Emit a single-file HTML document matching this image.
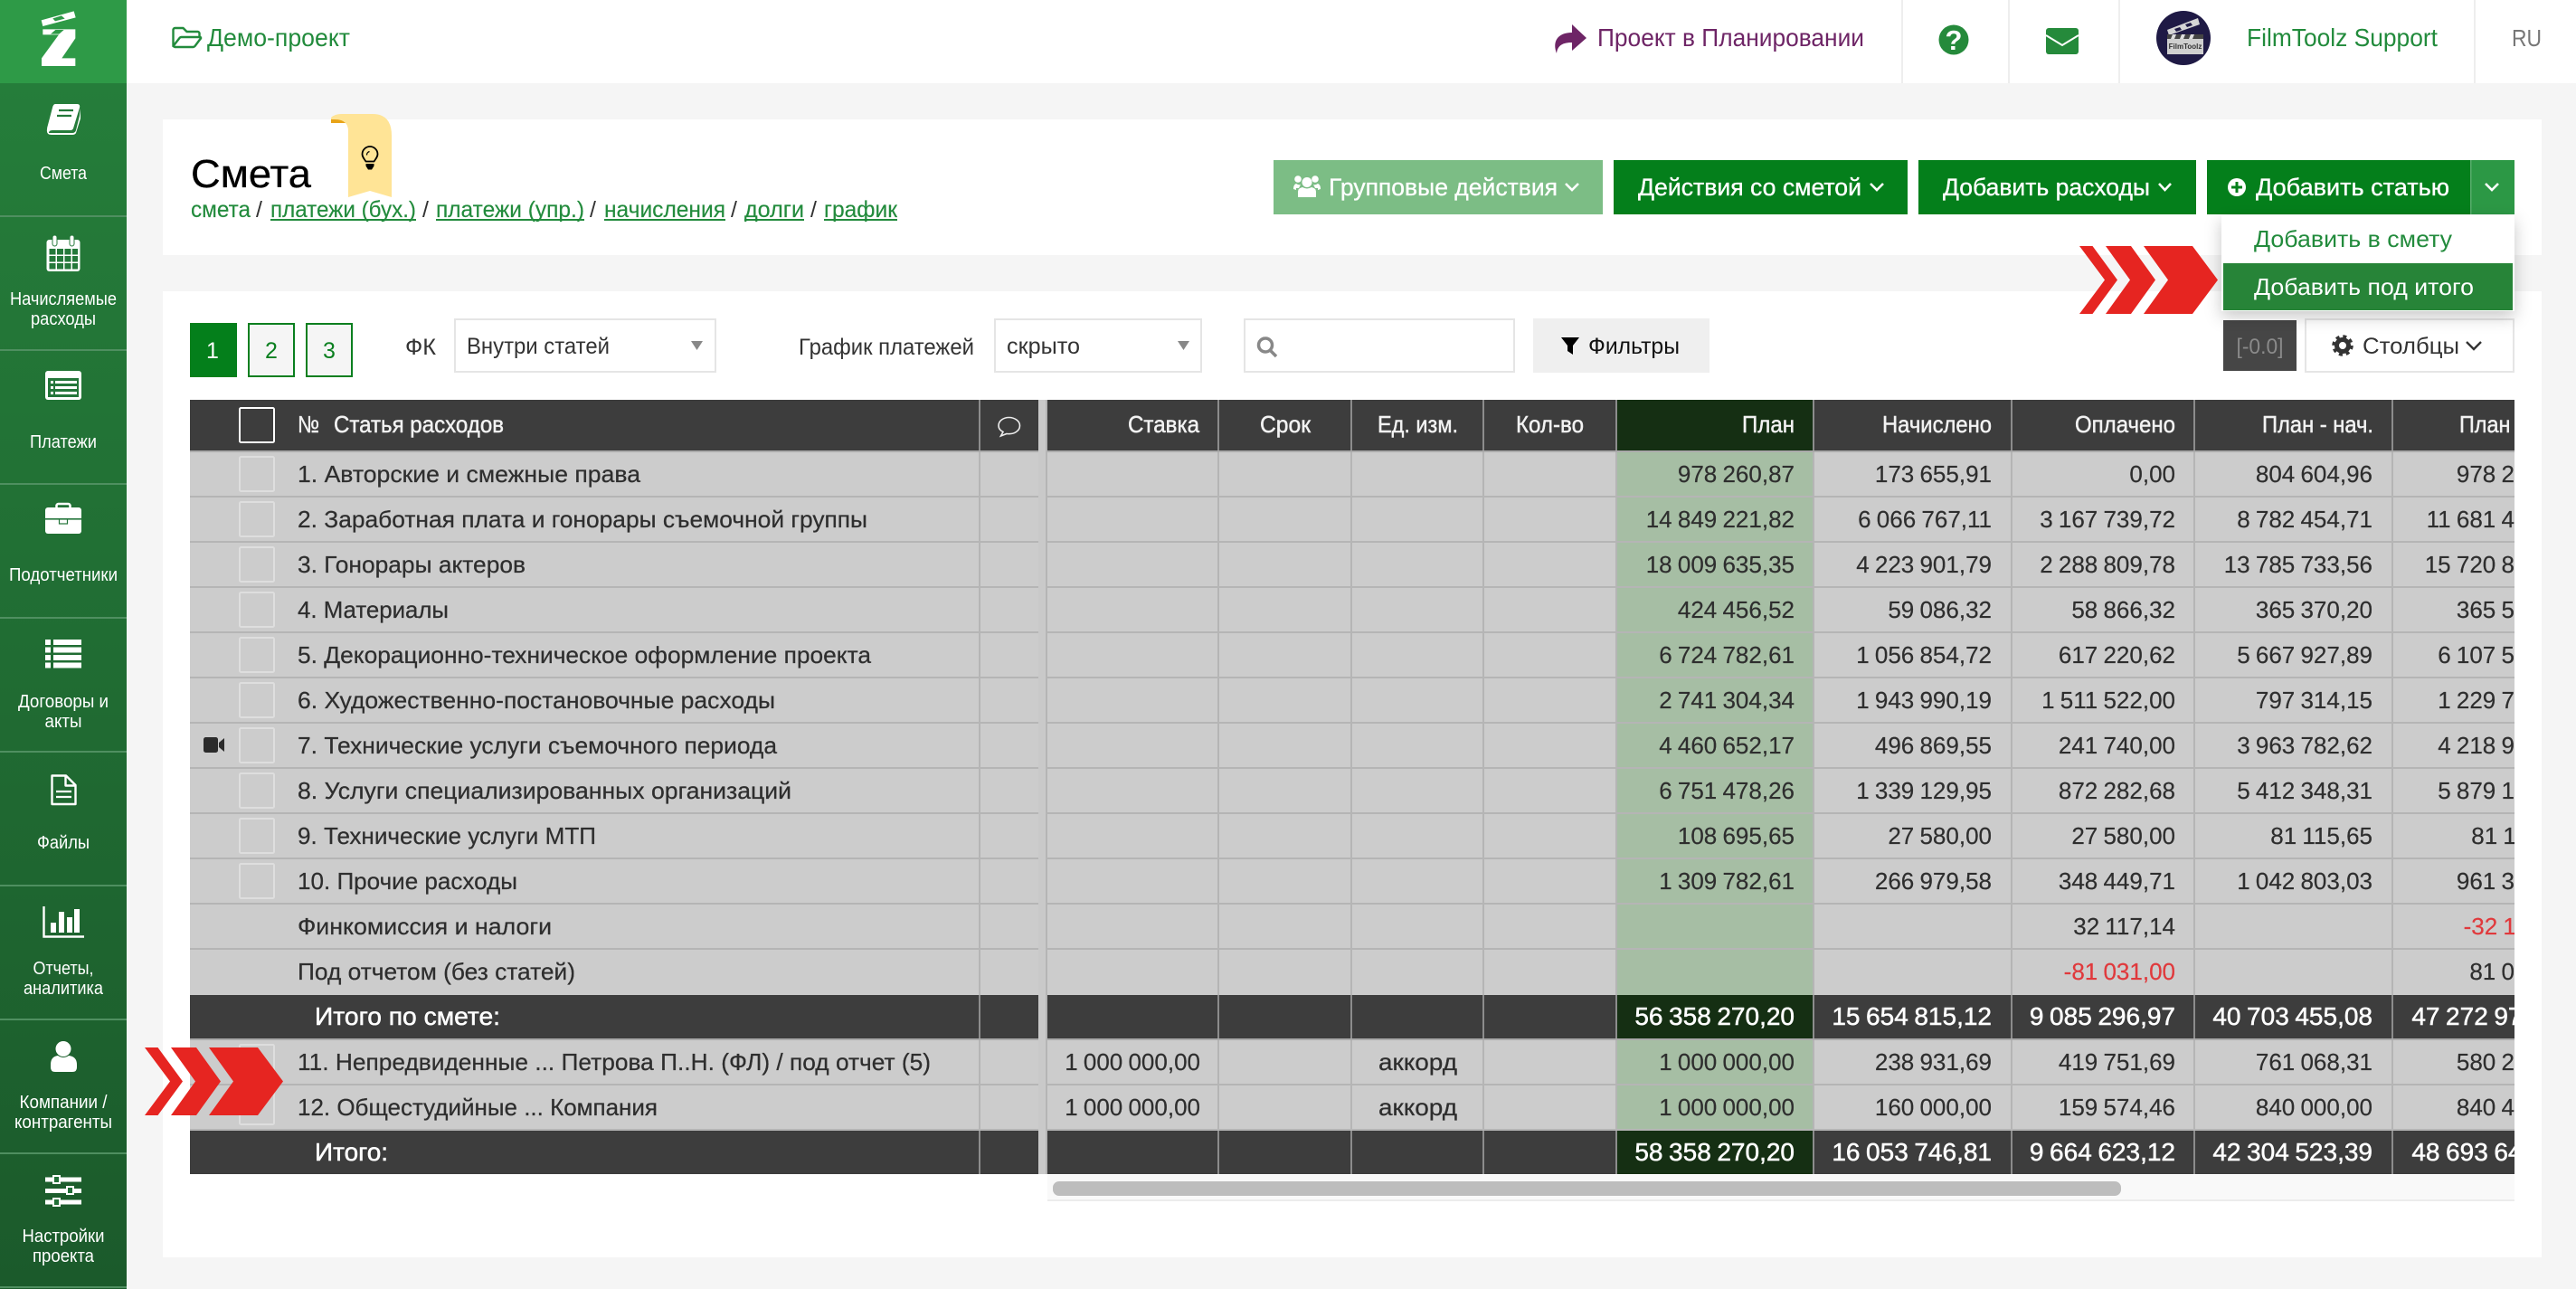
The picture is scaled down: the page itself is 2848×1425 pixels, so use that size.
<!DOCTYPE html>
<html lang="ru"><head><meta charset="utf-8"><title>Смета</title>
<style>
html,body{margin:0;padding:0;background:#f5f5f5;width:2848px;height:1425px;overflow:hidden}
svg{display:block}
text{font-family:"Liberation Sans","Noto Sans CJK SC",sans-serif;white-space:pre}
.s text{font-size:20px;fill:#fff;text-anchor:middle}
.r text{font-size:26px;fill:#2e2e2e;stroke:#2e2e2e;stroke-width:.25px}
.n text{font-size:26px;fill:#2e2e2e;stroke:#2e2e2e;stroke-width:.2px;text-anchor:end;word-spacing:-1px}
.d text{font-size:28px;fill:#fff;text-anchor:end;word-spacing:-1.2px;stroke:#fff;stroke-width:.5px}
.h text{font-size:26px;fill:#f2f2f2;stroke:#f2f2f2;stroke-width:.45px}
.b text{font-size:27px;fill:#fff;stroke:#fff;stroke-width:.35px}
.l text{font-size:25px;fill:#228b3c;stroke:#228b3c;stroke-width:.15px}
.n text.red{fill:#e0393c;stroke:#e0393c}
</style></head><body>
<svg xmlns="http://www.w3.org/2000/svg" width="2848" height="1425" viewBox="0 0 2848 1425">
<defs>
<linearGradient id="g" x1="0" y1="0" x2="0" y2="1"><stop offset="0" stop-color="#257d3a"/><stop offset="1" stop-color="#1b5a2b"/></linearGradient>
<clipPath id="c"><rect x="1158" y="430" width="1622" height="900"/></clipPath>
<filter id="sh" x="-20%" y="-20%" width="140%" height="150%"><feDropShadow dx="0" dy="6" stdDeviation="9" flood-color="#000" flood-opacity=".22"/></filter>
</defs>
<rect width="2848" height="1425" fill="#f5f5f5"/>
<!-- top bar -->
<rect x="140" width="2708" height="92" fill="#fff"/>
<rect x="2102" width="2" height="92" fill="#eee"/><rect x="2220" width="2" height="92" fill="#eee"/><rect x="2342" width="2" height="92" fill="#eee"/><rect x="2735" width="2" height="92" fill="#eee"/>
<path d="M191.5 51V33a2 2 0 0 1 2-2h9l4 4h12a2 2 0 0 1 2 2v4M191.5 51l7-9a3 3 0 0 1 2-1h20a1 1 0 0 1 1 2l-6 8a3 3 0 0 1-2 1h-20z" fill="none" stroke="#228b3c" stroke-width="2.4" stroke-linejoin="round"/>
<text x="229" y="51" font-size="28" fill="#228b3c" textLength="158" lengthAdjust="spacingAndGlyphs">Демо-проект</text>
<path d="M1738 27L1754 42L1738 56V47C1728 47 1722 50 1721 59C1716 46 1722 36 1738 36Z" fill="#6e2566"/>
<text x="1766" y="51" font-size="28" fill="#6e2566" textLength="295" lengthAdjust="spacingAndGlyphs">Проект в Планировании</text>
<circle cx="2160" cy="44" r="16.5" fill="#258a3b"/>
<text x="2160" y="55" font-size="31" font-weight="bold" fill="#fff" text-anchor="middle">?</text>
<rect x="2262" y="31" width="36" height="29" rx="3" fill="#258a3b"/>
<path d="M2262 39L2280 50L2298 39" fill="none" stroke="#fff" stroke-width="2"/>
<circle cx="2414" cy="42" r="30" fill="#1f1a45"/>
<path d="M2396 33L2430 20L2432 27L2398 39Z" fill="#d5d5d5"/>
<path d="M2404 32l6-2 2 3-6 2zM2416 27l6-2 2 3-6 2z" fill="#1f1a45"/>
<rect x="2396" y="38" width="40" height="22" fill="#cfcfcf"/>
<rect x="2396" y="38" width="40" height="5" fill="#444"/>
<path d="M2402 38h4l-2 5h-4zM2412 38h4l-2 5h-4zM2422 38h4l-2 5h-4z" fill="#ddd"/>
<text x="2416" y="54" font-size="8" font-weight="bold" fill="#333" text-anchor="middle">FilmToolz</text>
<text x="2484" y="51" font-size="28" fill="#228b3c" textLength="211" lengthAdjust="spacingAndGlyphs">FilmToolz Support</text>
<text x="2777" y="51" font-size="26" fill="#777" textLength="33" lengthAdjust="spacingAndGlyphs">RU</text>
<!-- sidebar -->
<rect y="92" width="140" height="1333" fill="url(#g)"/>
<rect width="140" height="92" fill="#2e9a47"/>
<g fill="#fff" transform="translate(30 5) scale(.3333)">
<path d="M47 52L155 22L161 43L52 72ZM85 46L93 55L125 47L114 37Z" fill-rule="evenodd"/>
<path d="M52 82H160V112L115 178H160V204H48V178L105 100H52ZM78 98H106L122 84H94Z" fill-rule="evenodd"/>
</g>
<g fill="#4f8f60"><rect y="238" width="140" height="2"/><rect y="386" width="140" height="2"/><rect y="534" width="140" height="2"/><rect y="682" width="140" height="2"/><rect y="830" width="140" height="2"/><rect y="978" width="140" height="2"/><rect y="1126" width="140" height="2"/><rect y="1274" width="140" height="2"/><rect y="1422" width="140" height="2"/></g>
<g class="s">
<text x="70" y="198" textLength="52" lengthAdjust="spacingAndGlyphs">Смета</text>
<text x="70" y="337" textLength="118" lengthAdjust="spacingAndGlyphs">Начисляемые</text><text x="70" y="359" textLength="72" lengthAdjust="spacingAndGlyphs">расходы</text>
<text x="70" y="495" textLength="74" lengthAdjust="spacingAndGlyphs">Платежи</text>
<text x="70" y="642" textLength="120" lengthAdjust="spacingAndGlyphs">Подотчетники</text>
<text x="70" y="782" textLength="100" lengthAdjust="spacingAndGlyphs">Договоры и</text><text x="70" y="804" textLength="41" lengthAdjust="spacingAndGlyphs">акты</text>
<text x="70" y="938" textLength="58" lengthAdjust="spacingAndGlyphs">Файлы</text>
<text x="70" y="1077" textLength="67" lengthAdjust="spacingAndGlyphs">Отчеты,</text><text x="70" y="1099" textLength="88" lengthAdjust="spacingAndGlyphs">аналитика</text>
<text x="70" y="1225" textLength="97" lengthAdjust="spacingAndGlyphs">Компании /</text><text x="70" y="1247" textLength="108" lengthAdjust="spacingAndGlyphs">контрагенты</text>
<text x="70" y="1373" textLength="91" lengthAdjust="spacingAndGlyphs">Настройки</text><text x="70" y="1395" textLength="68" lengthAdjust="spacingAndGlyphs">проекта</text>
</g>
<!-- sidebar icons -->
<path d="M61 115H85Q89 115 88 119L81 142Q80 144 78 144H58Q54 144 54 147H80Q83 147 84 144L88 128L89 120L89 131L84 147Q83 149 80 149H57Q51 149 52 143Q52 141 53 138L58 119Q59 115 61 115Z" fill="#fff"/>
<path d="M65 122H81M63 128H79" stroke="#24783a" stroke-width="2.2"/>
<rect x="51.5" y="265" width="37" height="35" rx="3" fill="#fff"/>
<rect x="58" y="260" width="5" height="12" rx="2.5" fill="#fff" stroke="#24783a" stroke-width="1"/><rect x="77" y="260" width="5" height="12" rx="2.5" fill="#fff" stroke="#24783a" stroke-width="1"/>
<g fill="#24783a"><rect x="54.5" y="275" width="7" height="6.5"/><rect x="63" y="275" width="7" height="6.5"/><rect x="71.5" y="275" width="7" height="6.5"/><rect x="80" y="275" width="6" height="6.5"/><rect x="54.5" y="283" width="7" height="6.5"/><rect x="63" y="283" width="7" height="6.5"/><rect x="71.5" y="283" width="7" height="6.5"/><rect x="80" y="283" width="6" height="6.5"/><rect x="54.5" y="291" width="7" height="6.5"/><rect x="63" y="291" width="7" height="6.5"/><rect x="71.5" y="291" width="7" height="6.5"/><rect x="80" y="291" width="6" height="6.5"/></g>
<rect x="50" y="410" width="40" height="32" rx="3" fill="#fff"/><rect x="53" y="418" width="34" height="21" fill="#24763a"/>
<g fill="#fff"><rect x="56" y="421" width="3" height="3"/><rect x="56" y="427" width="3" height="3"/><rect x="56" y="433" width="3" height="3"/><rect x="61" y="421" width="24" height="3"/><rect x="61" y="427" width="24" height="3"/><rect x="61" y="433" width="24" height="3"/></g>
<rect x="62.5" y="557" width="15" height="8" rx="2" fill="none" stroke="#fff" stroke-width="2.5"/>
<rect x="50" y="561" width="40" height="29" rx="3" fill="#fff"/><rect x="50" y="573" width="40" height="1.6" fill="#23743a"/><rect x="65.5" y="574" width="9" height="5" fill="#fff" stroke="#23743a" stroke-width="1.2"/>
<g fill="#fff"><rect x="50" y="707" width="6" height="6"/><rect x="59" y="707" width="31" height="6"/><rect x="50" y="715.5" width="6" height="6"/><rect x="59" y="715.5" width="31" height="6"/><rect x="50" y="724" width="6" height="6"/><rect x="59" y="724" width="31" height="6"/><rect x="50" y="732.5" width="6" height="6"/><rect x="59" y="732.5" width="31" height="6"/></g>
<path d="M57.5 857.5H73L83.5 868V889H57.5ZM72.5 858V868.5H83" fill="none" stroke="#fff" stroke-width="2.4" stroke-linejoin="round"/><path d="M62 875H79M62 881H79" stroke="#fff" stroke-width="2.2"/>
<path d="M48.5 1002V1035.5H93" fill="none" stroke="#fff" stroke-width="2.4"/>
<g fill="#fff"><rect x="56" y="1020" width="6" height="11"/><rect x="65" y="1008" width="6" height="23"/><rect x="74" y="1014" width="6" height="17"/><rect x="82" y="1005" width="6" height="26"/></g>
<circle cx="70" cy="1159.5" r="8.5" fill="#fff"/><path d="M56 1180V1177Q56 1168 64 1167Q70 1171 76 1167Q85 1168 85 1177V1180Q85 1185 80 1185H61Q56 1185 56 1180Z" fill="#fff"/>
<g fill="#fff"><rect x="50" y="1301.5" width="40" height="5"/><rect x="50" y="1314" width="40" height="5"/><rect x="50" y="1326.5" width="40" height="5"/></g>
<g fill="#226f38" stroke="#fff" stroke-width="2"><rect x="59" y="1300" width="7" height="8"/><rect x="74" y="1312" width="7" height="8"/><rect x="59" y="1325" width="7" height="8"/></g>
<!-- panels -->
<rect x="180" y="132" width="2630" height="150" fill="#fff"/>
<rect x="180" y="322" width="2630" height="1068" fill="#fff"/>
<text x="211" y="207" font-size="44" fill="#000" stroke="#000" stroke-width=".3" textLength="133" lengthAdjust="spacingAndGlyphs">Смета</text>
<!-- bookmark -->
<path d="M366 132Q368 127 378 127H382V136H366Z" fill="#e8a317"/>
<path d="M366 130Q370 126 378 126H412Q433 126 433 150V218L409 211L385 218V145Q385 132 370 132H366Z" fill="#ffe496"/>
<path d="M404.500 178.500C402 175 400.500 173 400.500 170.500A8.500 8.500 0 0 1 417.500 170.500C417.500 173 416 175 413.500 178.500Z" fill="none" stroke="#000" stroke-width="1.800"/>
<path d="M405.500 171.500a4 4 0 0 1 3-4" fill="none" stroke="#000" stroke-width="1.300"/>
<path d="M404.500 181H413.500V183.500L411 187.500H407L404.500 183.500Z" fill="#000"/>
<!-- breadcrumbs -->
<g class="l">
<text x="211" y="240" textLength="66" lengthAdjust="spacingAndGlyphs">смета</text>
<text x="299" y="240" textLength="161" lengthAdjust="spacingAndGlyphs">платежи (бух.)</text>
<text x="482" y="240" textLength="164" lengthAdjust="spacingAndGlyphs">платежи (упр.)</text>
<text x="668" y="240" textLength="134" lengthAdjust="spacingAndGlyphs">начисления</text>
<text x="823" y="240" textLength="66" lengthAdjust="spacingAndGlyphs">долги</text>
<text x="911" y="240" textLength="81" lengthAdjust="spacingAndGlyphs">график</text>
</g>
<g fill="#228b3c"><rect x="299" y="242" width="161" height="2"/><rect x="482" y="242" width="164" height="2"/><rect x="668" y="242" width="134" height="2"/><rect x="823" y="242" width="66" height="2"/><rect x="911" y="242" width="81" height="2"/></g>
<g font-size="25" fill="#333"><text x="283" y="240">/</text><text x="467" y="240">/</text><text x="652" y="240">/</text><text x="808" y="240">/</text><text x="896" y="240">/</text></g>
<!-- top buttons -->
<rect x="1408" y="177" width="364" height="60" fill="#7cbd85"/>
<rect x="1784" y="177" width="325" height="60" fill="#047f1b"/>
<rect x="2121" y="177" width="307" height="60" fill="#047f1b"/>
<rect x="2440" y="177" width="291" height="60" fill="#047f1b"/>
<rect x="2731" y="177" width="49" height="60" fill="#2c9845"/><rect x="2731" y="177" width="1.500" height="60" fill="#57ad6c"/>
<g class="b">
<text x="1469" y="216" textLength="253" lengthAdjust="spacingAndGlyphs">Групповые действия</text>
<text x="1811" y="216" textLength="247" lengthAdjust="spacingAndGlyphs">Действия со сметой</text>
<text x="2148" y="216" textLength="229" lengthAdjust="spacingAndGlyphs">Добавить расходы</text>
<text x="2494" y="216" textLength="214" lengthAdjust="spacingAndGlyphs">Добавить статью</text>
</g>
<g fill="none" stroke="#fff" stroke-width="2.600"><path d="M1731 203L1738 210L1745 203"/><path d="M2068 203L2075 210L2082 203"/><path d="M2387 203L2393.500 210L2400 203"/><path d="M2748 203L2755 210L2762 203"/></g>
<g fill="#fff"><circle cx="1445" cy="201.500" r="5.500"/><circle cx="1435" cy="198" r="3.800"/><circle cx="1454" cy="198" r="3.800"/><path d="M1435 218V212Q1435 208 1440 207Q1445 210 1450 207Q1455 208 1455 212V218Z"/><path d="M1430 209Q1430 204 1433 203Q1436 205 1438 204L1436 208H1433V210ZM1460 209Q1460 204 1457 203Q1454 205 1452 204L1454 208H1457V210Z"/></g>
<circle cx="2473" cy="207" r="10" fill="#fff"/><path d="M2473 201V213M2467 207H2479" stroke="#047f1b" stroke-width="3"/>
<!-- toolbar -->
<rect x="210" y="357" width="52" height="60" fill="#047f1b"/>
<rect x="275" y="358" width="50" height="58" fill="#f5f5f5" stroke="#0a7f1f" stroke-width="2"/>
<rect x="339" y="358" width="50" height="58" fill="#f5f5f5" stroke="#0a7f1f" stroke-width="2"/>
<text x="235" y="396" font-size="25" fill="#fff" text-anchor="middle">1</text>
<text x="300" y="396" font-size="25" fill="#0a7f1f" text-anchor="middle">2</text>
<text x="364" y="396" font-size="25" fill="#0a7f1f" text-anchor="middle">3</text>
<g font-size="25" fill="#333">
<text x="448" y="392" textLength="34" lengthAdjust="spacingAndGlyphs">ФК</text>
<text x="883" y="392" textLength="194" lengthAdjust="spacingAndGlyphs">График платежей</text>
</g>
<rect x="503" y="353" width="288" height="58" fill="#fff" stroke="#e5e5e5" stroke-width="2"/>
<rect x="1100" y="353" width="228" height="58" fill="#fff" stroke="#e5e5e5" stroke-width="2"/>
<rect x="1376" y="353" width="298" height="58" fill="#fff" stroke="#e5e5e5" stroke-width="2"/>
<g font-size="25" fill="#333">
<text x="516" y="391" textLength="158" lengthAdjust="spacingAndGlyphs">Внутри статей</text>
<text x="1113" y="391" textLength="81" lengthAdjust="spacingAndGlyphs">скрыто</text>
</g>
<path d="M764 377H777L770.500 387ZM1302 377H1315L1308.500 387Z" fill="#888"/>
<circle cx="1399" cy="381.500" r="7.500" fill="none" stroke="#888" stroke-width="3.500"/><path d="M1404 387L1411 394" stroke="#888" stroke-width="3.500"/>
<rect x="1695" y="352" width="195" height="60" fill="#efefef"/>
<path d="M1726 373H1746L1739 382V392L1733 388V382Z" fill="#000"/>
<text x="1756" y="391" font-size="25" fill="#111" textLength="101" lengthAdjust="spacingAndGlyphs">Фильтры</text>
<!-- table left -->
<rect x="210" y="442" width="938" height="856" fill="#ccc"/>
<rect x="1148" y="442" width="10" height="856" fill="#c9c9c9"/>
<rect x="1158" y="442" width="1622" height="856" fill="#ccc"/>
<rect x="1787" y="500" width="218" height="798" fill="#a6bea4"/>
<g fill="#b5b5b5">
<rect x="210" y="548" width="938" height="2"/><rect x="210" y="598" width="938" height="2"/><rect x="210" y="648" width="938" height="2"/><rect x="210" y="698" width="938" height="2"/><rect x="210" y="748" width="938" height="2"/><rect x="210" y="798" width="938" height="2"/><rect x="210" y="848" width="938" height="2"/><rect x="210" y="898" width="938" height="2"/><rect x="210" y="948" width="938" height="2"/><rect x="210" y="998" width="938" height="2"/><rect x="210" y="1048" width="938" height="2"/><rect x="210" y="1198" width="938" height="2"/><rect x="210" y="1248" width="938" height="2"/>
<rect x="1158" y="548" width="1622" height="2"/><rect x="1158" y="598" width="1622" height="2"/><rect x="1158" y="648" width="1622" height="2"/><rect x="1158" y="698" width="1622" height="2"/><rect x="1158" y="748" width="1622" height="2"/><rect x="1158" y="798" width="1622" height="2"/><rect x="1158" y="848" width="1622" height="2"/><rect x="1158" y="898" width="1622" height="2"/><rect x="1158" y="948" width="1622" height="2"/><rect x="1158" y="998" width="1622" height="2"/><rect x="1158" y="1048" width="1622" height="2"/><rect x="1158" y="1198" width="1622" height="2"/><rect x="1158" y="1248" width="1622" height="2"/>
<rect x="1082" y="500" width="2" height="798"/><rect x="1156" y="442" width="2" height="856"/>
<rect x="1346" y="500" width="2" height="798"/><rect x="1493" y="500" width="2" height="798"/><rect x="1639" y="500" width="2" height="798"/><rect x="1786" y="500" width="2" height="798"/><rect x="2004" y="500" width="2" height="798"/><rect x="2223" y="500" width="2" height="798"/><rect x="2425" y="500" width="2" height="798"/><rect x="2644" y="500" width="2" height="798"/>
</g>
<!-- dark rows -->
<g fill="#3d3d3d">
<rect x="210" y="442" width="938" height="56"/><rect x="1158" y="442" width="1622" height="56"/>
<rect x="210" y="1100" width="938" height="48"/><rect x="1158" y="1100" width="1622" height="48"/>
<rect x="210" y="1250" width="938" height="48"/><rect x="1158" y="1250" width="1622" height="48"/>
</g>
<g fill="#aaa"><rect x="210" y="498" width="938" height="2"/><rect x="1158" y="498" width="1622" height="2"/><rect x="210" y="1148" width="938" height="2"/><rect x="1158" y="1148" width="1622" height="2"/></g>
<g fill="#152f13"><rect x="1787" y="442" width="218" height="56"/><rect x="1787" y="1100" width="218" height="48"/><rect x="1787" y="1250" width="218" height="48"/></g>
<g fill="#8c8c8c">
<rect x="1082" y="442" width="2" height="56"/><rect x="1346" y="442" width="2" height="56"/><rect x="1493" y="442" width="2" height="56"/><rect x="1639" y="442" width="2" height="56"/><rect x="1786" y="442" width="2" height="56"/><rect x="2004" y="442" width="2" height="56"/><rect x="2223" y="442" width="2" height="56"/><rect x="2425" y="442" width="2" height="56"/><rect x="2644" y="442" width="2" height="56"/>
<rect x="1082" y="1100" width="2" height="48"/><rect x="1346" y="1100" width="2" height="48"/><rect x="1493" y="1100" width="2" height="48"/><rect x="1639" y="1100" width="2" height="48"/><rect x="1786" y="1100" width="2" height="48"/><rect x="2004" y="1100" width="2" height="48"/><rect x="2223" y="1100" width="2" height="48"/><rect x="2425" y="1100" width="2" height="48"/><rect x="2644" y="1100" width="2" height="48"/>
<rect x="1082" y="1250" width="2" height="48"/><rect x="1346" y="1250" width="2" height="48"/><rect x="1493" y="1250" width="2" height="48"/><rect x="1639" y="1250" width="2" height="48"/><rect x="1786" y="1250" width="2" height="48"/><rect x="2004" y="1250" width="2" height="48"/><rect x="2223" y="1250" width="2" height="48"/><rect x="2425" y="1250" width="2" height="48"/><rect x="2644" y="1250" width="2" height="48"/>
</g>
<!-- checkboxes -->
<rect x="265" y="451" width="38" height="38" rx="1.500" fill="none" stroke="#fff" stroke-width="2"/>
<g fill="none" stroke="#dedede" stroke-width="2">
<rect x="265" y="505" width="38" height="38" rx="1.500"/><rect x="265" y="555" width="38" height="38" rx="1.500"/><rect x="265" y="605" width="38" height="38" rx="1.500"/><rect x="265" y="655" width="38" height="38" rx="1.500"/><rect x="265" y="705" width="38" height="38" rx="1.500"/><rect x="265" y="755" width="38" height="38" rx="1.500"/><rect x="265" y="805" width="38" height="38" rx="1.500"/><rect x="265" y="855" width="38" height="38" rx="1.500"/><rect x="265" y="905" width="38" height="38" rx="1.500"/><rect x="265" y="955" width="38" height="38" rx="1.500"/>
<rect x="265" y="1155" width="38" height="88" rx="1.500"/>
</g>
<rect x="225" y="815" width="16" height="17" rx="2.500" fill="#2b2b2b"/><path d="M242 821L248 816V831L242 826Z" fill="#2b2b2b"/>
<!-- header labels -->
<g class="h">
<text x="329" y="478" textLength="24" lengthAdjust="spacingAndGlyphs">№</text>
<text x="369" y="478" textLength="188" lengthAdjust="spacingAndGlyphs">Статья расходов</text>
<text x="1247" y="478" textLength="79" lengthAdjust="spacingAndGlyphs">Ставка</text>
<text x="1393" y="478" textLength="56" lengthAdjust="spacingAndGlyphs">Срок</text>
<text x="1523" y="478" textLength="89" lengthAdjust="spacingAndGlyphs">Ед. изм.</text>
<text x="1676" y="478" textLength="75" lengthAdjust="spacingAndGlyphs">Кол-во</text>
<text x="1926" y="478" textLength="58" lengthAdjust="spacingAndGlyphs">План</text>
<text x="2081" y="478" textLength="121" lengthAdjust="spacingAndGlyphs">Начислено</text>
<text x="2294" y="478" textLength="111" lengthAdjust="spacingAndGlyphs">Оплачено</text>
<text x="2501" y="478" textLength="123" lengthAdjust="spacingAndGlyphs">План - нач.</text>
<text x="2719" y="478" textLength="123" lengthAdjust="spacingAndGlyphs" clip-path="url(#c)">План - опл.</text>
</g>
<path d="M1115.500 461.500C1109 461.500 1104 465.500 1104 470.500C1104 473.500 1106 476 1109 477.500L1106.500 482L1113 479.500C1121 480.500 1127.500 476.500 1127.500 470.500C1127.500 465.500 1122 461.500 1115.500 461.500Z" fill="none" stroke="#eee" stroke-width="1.600"/>
<!-- row labels -->
<g class="r">
<text x="329" y="533" textLength="379" lengthAdjust="spacingAndGlyphs">1. Авторские и смежные права</text>
<text x="329" y="583" textLength="630" lengthAdjust="spacingAndGlyphs">2. Заработная плата и гонорары съемочной группы</text>
<text x="329" y="633" textLength="252" lengthAdjust="spacingAndGlyphs">3. Гонорары актеров</text>
<text x="329" y="683" textLength="167" lengthAdjust="spacingAndGlyphs">4. Материалы</text>
<text x="329" y="733" textLength="634" lengthAdjust="spacingAndGlyphs">5. Декорационно-техническое оформление проекта</text>
<text x="329" y="783" textLength="528" lengthAdjust="spacingAndGlyphs">6. Художественно-постановочные расходы</text>
<text x="329" y="833" textLength="530" lengthAdjust="spacingAndGlyphs">7. Технические услуги съемочного периода</text>
<text x="329" y="883" textLength="546" lengthAdjust="spacingAndGlyphs">8. Услуги специализированных организаций</text>
<text x="329" y="933" textLength="330" lengthAdjust="spacingAndGlyphs">9. Технические услуги МТП</text>
<text x="329" y="983" textLength="243" lengthAdjust="spacingAndGlyphs">10. Прочие расходы</text>
<text x="329" y="1033" textLength="281" lengthAdjust="spacingAndGlyphs">Финкомиссия и налоги</text>
<text x="329" y="1083" textLength="307" lengthAdjust="spacingAndGlyphs">Под отчетом (без статей)</text>
<text x="329" y="1183" textLength="700" lengthAdjust="spacingAndGlyphs">11. Непредвиденные ... Петрова П..Н. (ФЛ) / под отчет (5)</text>
<text x="329" y="1233" textLength="398" lengthAdjust="spacingAndGlyphs">12. Общестудийные ... Компания</text>
<text x="1524" y="1183" textLength="87" lengthAdjust="spacingAndGlyphs">аккорд</text>
<text x="1524" y="1233" textLength="87" lengthAdjust="spacingAndGlyphs">аккорд</text>
</g>
<text x="348" y="1133" font-size="28" fill="#fff" stroke="#fff" stroke-width=".5" textLength="205" lengthAdjust="spacingAndGlyphs">Итого по смете:</text>
<text x="348" y="1283" font-size="28" fill="#fff" stroke="#fff" stroke-width=".5" textLength="81" lengthAdjust="spacingAndGlyphs">Итого:</text>
<!-- numbers -->
<g class="n">
<text x="1327" y="1183">1 000 000,00</text><text x="1327" y="1233">1 000 000,00</text>
<text x="1984" y="533">978 260,87</text><text x="2202" y="533">173 655,91</text><text x="2405" y="533">0,00</text><text x="2623" y="533">804 604,96</text>
<text x="1984" y="583">14 849 221,82</text><text x="2202" y="583">6 066 767,11</text><text x="2405" y="583">3 167 739,72</text><text x="2623" y="583">8 782 454,71</text>
<text x="1984" y="633">18 009 635,35</text><text x="2202" y="633">4 223 901,79</text><text x="2405" y="633">2 288 809,78</text><text x="2623" y="633">13 785 733,56</text>
<text x="1984" y="683">424 456,52</text><text x="2202" y="683">59 086,32</text><text x="2405" y="683">58 866,32</text><text x="2623" y="683">365 370,20</text>
<text x="1984" y="733">6 724 782,61</text><text x="2202" y="733">1 056 854,72</text><text x="2405" y="733">617 220,62</text><text x="2623" y="733">5 667 927,89</text>
<text x="1984" y="783">2 741 304,34</text><text x="2202" y="783">1 943 990,19</text><text x="2405" y="783">1 511 522,00</text><text x="2623" y="783">797 314,15</text>
<text x="1984" y="833">4 460 652,17</text><text x="2202" y="833">496 869,55</text><text x="2405" y="833">241 740,00</text><text x="2623" y="833">3 963 782,62</text>
<text x="1984" y="883">6 751 478,26</text><text x="2202" y="883">1 339 129,95</text><text x="2405" y="883">872 282,68</text><text x="2623" y="883">5 412 348,31</text>
<text x="1984" y="933">108 695,65</text><text x="2202" y="933">27 580,00</text><text x="2405" y="933">27 580,00</text><text x="2623" y="933">81 115,65</text>
<text x="1984" y="983">1 309 782,61</text><text x="2202" y="983">266 979,58</text><text x="2405" y="983">348 449,71</text><text x="2623" y="983">1 042 803,03</text>
<text x="2405" y="1033">32 117,14</text>
<text x="2405" y="1083" class="red">-81 031,00</text>
<text x="1984" y="1183">1 000 000,00</text><text x="2202" y="1183">238 931,69</text><text x="2405" y="1183">419 751,69</text><text x="2623" y="1183">761 068,31</text>
<text x="1984" y="1233">1 000 000,00</text><text x="2202" y="1233">160 000,00</text><text x="2405" y="1233">159 574,46</text><text x="2623" y="1233">840 000,00</text>
</g>
<g class="d">
<text x="1984" y="1133">56 358 270,20</text><text x="2202" y="1133">15 654 815,12</text><text x="2405" y="1133">9 085 296,97</text><text x="2623" y="1133">40 703 455,08</text>
<text x="1984" y="1283">58 358 270,20</text><text x="2202" y="1283">16 053 746,81</text><text x="2405" y="1283">9 664 623,12</text><text x="2623" y="1283">42 304 523,39</text>
</g>
<!-- clipped last column -->
<g clip-path="url(#c)">
<g class="n">
<text x="2845" y="533">978 260,87</text><text x="2845" y="583">11 681 482,10</text><text x="2845" y="633">15 720 825,57</text><text x="2845" y="683">365 590,20</text><text x="2845" y="733">6 107 561,99</text><text x="2845" y="783">1 229 782,34</text><text x="2845" y="833">4 218 912,17</text><text x="2845" y="883">5 879 195,58</text><text x="2845" y="933">81 115,65</text><text x="2845" y="983">961 332,90</text>
<text x="2845" y="1033" class="red">-32 117,14</text><text x="2845" y="1083">81 031,00</text>
<text x="2845" y="1183">580 248,31</text><text x="2845" y="1233">840 425,54</text>
</g>
<g class="d"><text x="2843" y="1133">47 272 973,23</text><text x="2843" y="1283">48 693 647,08</text></g>
</g>
<!-- scrollbar -->
<rect x="1158" y="1299" width="1622" height="28" fill="#f9f9f9"/><rect x="1158" y="1326" width="1622" height="2" fill="#ececec"/>
<rect x="1164" y="1306" width="1181" height="16" rx="7" fill="#bdbdbd"/>
<!-- right tools -->
<rect x="2458" y="354" width="81" height="56" fill="#464646"/>
<text x="2498.500" y="391" font-size="24" fill="#8a8a8a" text-anchor="middle" textLength="52" lengthAdjust="spacingAndGlyphs">[-0.0]</text>
<rect x="2549" y="353" width="230" height="58" fill="#fff" stroke="#e5e5e5" stroke-width="2"/>
<circle cx="2590" cy="382" r="6.500" fill="none" stroke="#333" stroke-width="5"/><circle cx="2590" cy="382" r="10" fill="none" stroke="#333" stroke-width="3.500" stroke-dasharray="4 3.850"/>
<text x="2612" y="391" font-size="25" fill="#333" textLength="107" lengthAdjust="spacingAndGlyphs">Столбцы</text>
<path d="M2727 378L2735 386L2743 378" fill="none" stroke="#333" stroke-width="2.400"/>
<!-- dropdown -->
<rect x="2456" y="238" width="324" height="106" fill="#fff" filter="url(#sh)"/>
<rect x="2458" y="291" width="320" height="52" fill="#278438"/>
<text x="2492" y="273" font-size="26" fill="#228b3c" textLength="219" lengthAdjust="spacingAndGlyphs">Добавить в смету</text>
<text x="2492" y="326" font-size="26" fill="#fff" textLength="243" lengthAdjust="spacingAndGlyphs">Добавить под итого</text>
<!-- red arrows -->
<g fill="#e62521">
<path d="M160 1158H174.500L202 1195.500L174.500 1233H160L188 1195.500Z"/>
<path d="M189 1158H217L244 1195.500L217 1233H189L216 1195.500Z"/>
<path d="M231 1158H285L313 1195.500L285 1233H231L258 1195.500Z"/>
</g>
<g fill="#e62521" transform="translate(2139 -886)">
<path d="M160 1158H174.500L202 1195.500L174.500 1233H160L188 1195.500Z"/>
<path d="M189 1158H217L244 1195.500L217 1233H189L216 1195.500Z"/>
<path d="M231 1158H285L313 1195.500L285 1233H231L258 1195.500Z"/>
</g>
</svg>
</body></html>
